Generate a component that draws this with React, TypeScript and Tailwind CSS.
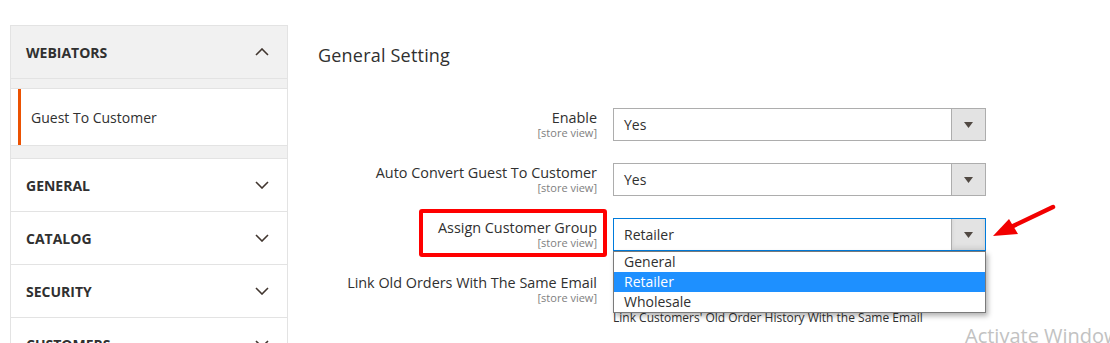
const sections = ["GENERAL", "CATALOG", "SECURITY", "CUSTOMERS"];

const Chevron = ({ up }: { up?: boolean }) => (
  <svg width="14" height="8" viewBox="0 0 14 8" fill="none">
    <polyline
      points={up ? "1,7 7,1 13,7" : "1,1 7,7 13,1"}
      stroke="#41362f"
      strokeWidth="1.6"
      strokeLinejoin="miter"
    />
  </svg>
);

type SelectProps = {
  value: string;
  focused?: boolean;
};

const Select = ({ value, focused }: SelectProps) => (
  <div
    className={`flex h-[33px] w-[373px] items-stretch border bg-white ${
      focused ? "border-[#007bdb]" : "border-[#adadad]"
    }`}
  >
    <div className="flex flex-1 items-center pl-[10px] text-[14px] text-[#303030]">{value}</div>
    <div
      className={`flex w-[34px] items-center justify-center border-l border-[#adadad] bg-[#e3e3e3] ${
        focused ? "shadow-[inset_0_-3px_4px_rgba(0,0,0,0.08)]" : ""
      }`}
    >
      <svg width="9" height="6" viewBox="0 0 9 6">
        <polygon points="0,0 9,0 4.5,6" fill="#514943" />
      </svg>
    </div>
  </div>
);

const Label = ({ text }: { text: string }) => (
  <div className="flex flex-col items-end pt-[1px] text-right">
    <span className="text-[14.4px] leading-[18px] text-[#303030]">{text}</span>
    <span className="text-[11px] leading-[11px] text-[#808080]">[store view]</span>
  </div>
);

const groups = ["General", "Retailer", "Wholesale"];

export default function App() {
  return (
    <div className="relative h-[343px] w-[1110px] overflow-hidden bg-white font-['Open_Sans',sans-serif]">
      <div className="flex px-[10px] pt-[25px]">
        {/* sidebar */}
        <aside className="w-[278px] shrink-0 border-x border-t border-[#e3e3e3] bg-[#f1f1f1]">
          <div className="flex h-[53px] items-center justify-between border-b border-[#e3e3e3] pl-[15px] pr-[18px]">
            <span className="text-[14px] font-bold text-[#303030]">WEBIATORS</span>
            <Chevron up />
          </div>
          <div className="mt-[9px] flex h-[58px] items-center border-y border-[#e3e3e3] bg-white pl-[7px]">
            <div className="flex h-full w-full items-center border-l-[3px] border-[#eb5202] pl-[10px] text-[14px] text-[#303030]">
              Guest To Customer
            </div>
          </div>
          <div className="mt-[12px]">
            {sections.map((s) => (
              <div
                key={s}
                className="flex h-[53px] items-center justify-between border-t border-[#e3e3e3] bg-white pl-[15px] pr-[18px]"
              >
                <span className="text-[14px] font-bold text-[#303030]">{s}</span>
                <Chevron />
              </div>
            ))}
          </div>
        </aside>

        {/* main */}
        <main className="ml-[30px] pt-[18px]">
          <h2 className="text-[18px] leading-[24px] font-normal tracking-[0.2px] text-[#303030]">General Setting</h2>

          <div className="mt-[41px] grid grid-cols-[279px_373px] gap-x-[16px] gap-y-[22px]">
            <Label text="Enable" />
            <Select value="Yes" />

            <Label text="Auto Convert Guest To Customer" />
            <Select value="Yes" />

            <div className="relative">
              <Label text="Assign Customer Group" />
              <div className="absolute top-[-9px] right-[-10px] h-[48px] w-[188px] rounded-[3px] border-[4px] border-[#ff0000]" />
            </div>
            <div className="relative z-10">
              <Select value="Retailer" focused />
              <ul className="absolute top-full left-0 w-[373px] border border-[#7a7a7a] bg-white shadow-[2px_3px_5px_rgba(0,0,0,0.3)]">
                {groups.map((g) => (
                  <li
                    key={g}
                    className={`h-[20px] pl-[10px] text-[14px] leading-[20px] ${
                      g === "Retailer" ? "bg-[#1e90ff] text-white" : "text-[#303030]"
                    }`}
                  >
                    {g}
                  </li>
                ))}
              </ul>
            </div>

            <Label text="Link Old Orders With The Same Email" />
            <div>
              {/* hidden behind the open dropdown */}
              <Select value="" />
              <p className="mt-[4px] text-[12px] leading-[16px] text-[#303030]">
                Link Customers' Old Order History With the Same Email
              </p>
            </div>
          </div>
        </main>
      </div>

      {/* annotation arrow */}
      <svg className="absolute top-[200px] left-[985px]" width="80" height="45" viewBox="0 0 80 45">
        <line x1="68" y1="7" x2="26" y2="27" stroke="#f20000" strokeWidth="4.5" strokeLinecap="round" />
        <polygon points="8,36 24,19 33,34" fill="#f20000" />
      </svg>

      {/* watermark */}
      <div className="absolute top-[323px] left-[965px] text-[20px] leading-[26px] whitespace-nowrap text-[#c2c2c2]">
        Activate Windows
      </div>
    </div>
  );
}
